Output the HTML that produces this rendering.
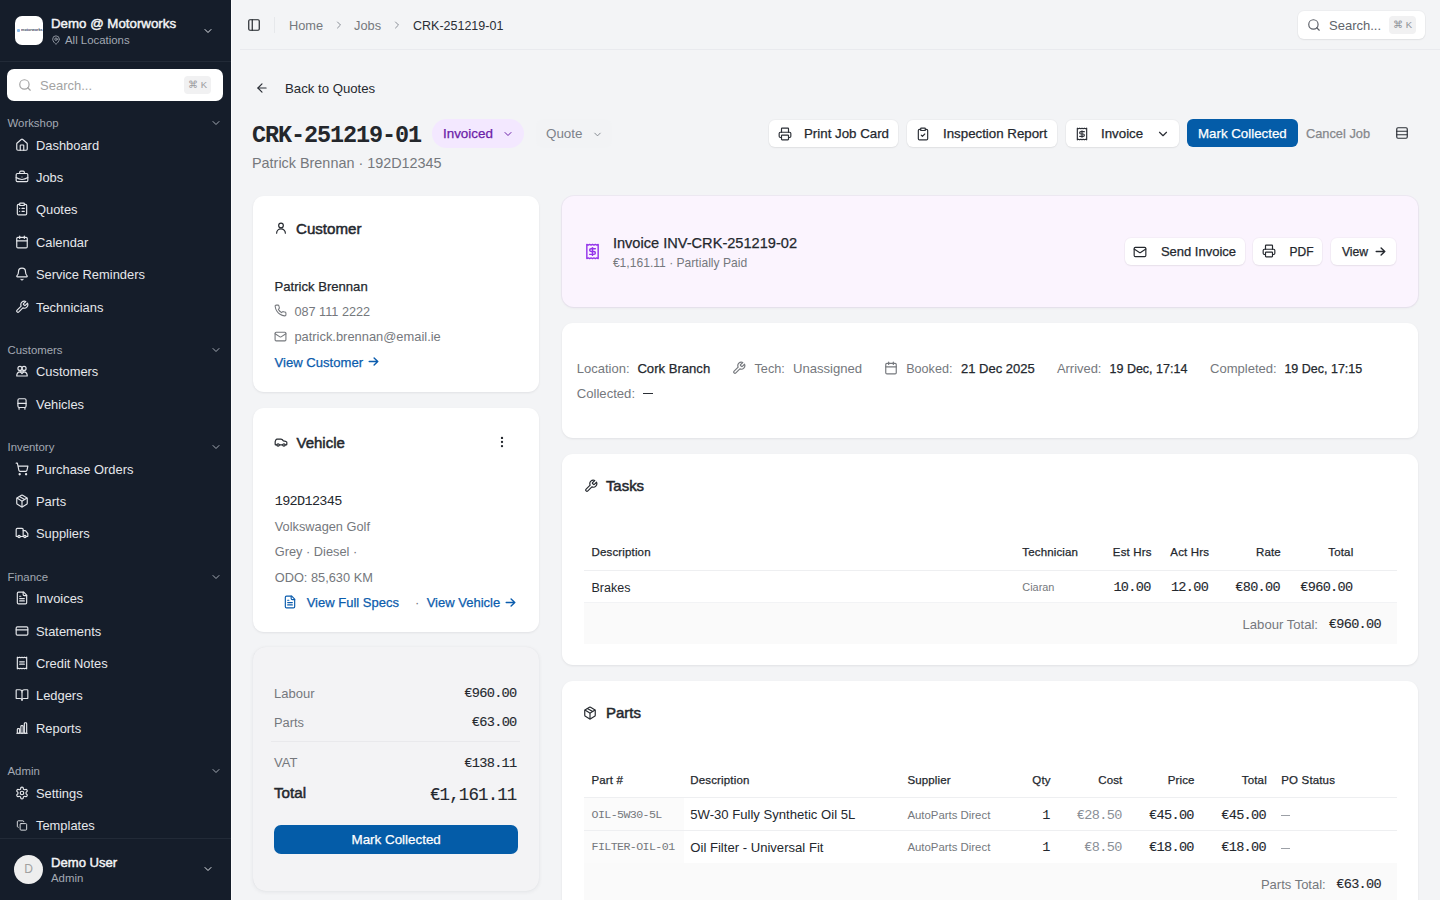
<!DOCTYPE html>
<html><head><meta charset="utf-8">
<style>
*{box-sizing:border-box;margin:0;padding:0}
html,body{width:1440px;height:900px;overflow:hidden}
body{font-family:"Liberation Sans",sans-serif;background:#f3f4f6;color:#1f2328;position:relative}
.abs{position:absolute}
svg.i{fill:none;stroke:currentColor;stroke-width:2;stroke-linecap:round;stroke-linejoin:round;display:block}
.mono{font-family:"Liberation Mono",monospace}
/* sidebar */
#sb{position:absolute;left:0;top:0;width:231px;height:900px;background:#151d2a;color:#e5e7eb}
#sbline{position:absolute;left:231px;top:0;width:1px;height:900px;background:#fbfbfc}
.logo{position:absolute;left:15px;top:16px;width:28px;height:29px;background:#fff;border-radius:7px}
.org{position:absolute;left:51px;top:15.5px;font-size:13.3px;color:#f3f4f6;white-space:nowrap;-webkit-text-stroke:0.45px currentColor}
.loc{position:absolute;left:50px;top:34px;font-size:11.4px;color:#a3a9b3;white-space:nowrap;display:flex;align-items:center}
.sdiv{position:absolute;left:0;top:61px;width:231px;height:1px;background:#222a37}
.ssearch{position:absolute;left:7px;top:69px;width:215.5px;height:32px;background:#fff;border-radius:7px}
.kbd{position:absolute;background:#f1f1f2;border-radius:4px;color:#9a9a9e;font-size:9.5px;text-align:center}
.sec{position:absolute;left:7.5px;margin-top:1px;font-size:11.4px;color:#a3a9b3;white-space:nowrap}
.secchev{position:absolute;left:210px;color:#a3a9b3}
.nav{position:absolute;left:15px;font-size:12.9px;color:#e5e7eb;white-space:nowrap;display:flex;align-items:center;height:16px}
.nav svg{margin-right:7px;width:14px;height:14px;flex:none}
.avatar{position:absolute;left:14px;top:855px;width:29px;height:29px;border-radius:50%;background:#eeeeee;color:#a0a0a0;font-size:12px;text-align:center;line-height:29px}
.bc{top:18px;font-size:12.8px;white-space:nowrap}
.btn{background:#fff;border-radius:6px;box-shadow:0 1px 2px rgba(0,0,0,.06),0 0 0 1px rgba(0,0,0,.025)}
.bt{top:126px;font-size:13.3px;color:#24282e;white-space:nowrap;-webkit-text-stroke:0.25px currentColor}
.t{line-height:1;white-space:nowrap}
</style></head>
<body>
<div id="sb">
  <div class="logo"><div class="abs" style="left:1.5px;top:12.5px;width:3.5px;height:3px;background:#8cbcec;border-radius:1px"></div><div class="abs" style="left:5.5px;top:11.2px;font-size:7.6px;line-height:9px;color:#3a4560;font-weight:bold;transform:scale(0.5);transform-origin:0 0;white-space:nowrap">motorworks</div></div>
  <div class="org">Demo @ Motorworks</div>
  <div class="loc"><svg class="i" width="10" height="10" viewBox="0 0 24 24" style="margin-right:4px;margin-left:1px"><path d="M20 10c0 4.993-5.539 10.193-7.399 11.799a1 1 0 0 1-1.202 0C9.539 20.193 4 14.993 4 10a8 8 0 0 1 16 0"/><circle cx="12" cy="10" r="3"/></svg>All Locations</div>
  <svg class="i abs" style="left:202px;top:25px;color:#e2e5ea" width="12" height="12" viewBox="0 0 24 24"><path d="m6 9 6 6 6-6"/></svg>
  <div class="sdiv"></div>
  <div class="ssearch">
    <svg class="i abs" style="left:11px;top:9px;color:#a3a3a3" width="14" height="14" viewBox="0 0 24 24"><circle cx="11" cy="11" r="8"/><path d="m21 21-4.3-4.3"/></svg>
    <div class="abs" style="left:33px;top:9px;font-size:13px;color:#a3a3a3">Search...</div>
    <div class="kbd" style="left:177px;top:7px;width:27px;height:18px;line-height:18px">⌘ K</div>
  </div>
  <div class="sec" style="top:116px">Workshop</div><svg class="i secchev" style="top:117px" width="12" height="12" viewBox="0 0 24 24"><path d="m6 9 6 6 6-6"/></svg>
  <div class="nav" style="top:137px"><svg class="i" viewBox="0 0 24 24"><path d="M15 21v-8a1 1 0 0 0-1-1h-4a1 1 0 0 0-1 1v8"/><path d="M3 10a2 2 0 0 1 .709-1.528l7-5.999a2 2 0 0 1 2.582 0l7 5.999A2 2 0 0 1 21 10v9a2 2 0 0 1-2 2H5a2 2 0 0 1-2-2z"/></svg>Dashboard</div>
  <div class="nav" style="top:169px"><svg class="i" viewBox="0 0 24 24"><path d="M12 12h.01"/><path d="M16 6V4a2 2 0 0 0-2-2h-4a2 2 0 0 0-2 2v2"/><path d="M22 13a18.15 18.15 0 0 1-20 0"/><rect width="20" height="14" x="2" y="6" rx="2"/></svg>Jobs</div>
  <div class="nav" style="top:201px"><svg class="i" viewBox="0 0 24 24"><rect width="8" height="4" x="8" y="2" rx="1" ry="1"/><path d="M16 4h2a2 2 0 0 1 2 2v14a2 2 0 0 1-2 2H6a2 2 0 0 1-2-2V6a2 2 0 0 1 2-2h2"/><path d="M12 11h4"/><path d="M12 16h4"/><path d="M8 11h.01"/><path d="M8 16h.01"/></svg>Quotes</div>
  <div class="nav" style="top:234px"><svg class="i" viewBox="0 0 24 24"><path d="M8 2v4"/><path d="M16 2v4"/><rect width="18" height="18" x="3" y="4" rx="2"/><path d="M3 10h18"/></svg>Calendar</div>
  <div class="nav" style="top:266px"><svg class="i" viewBox="0 0 24 24"><path d="M10.268 21a2 2 0 0 0 3.464 0"/><path d="M3.262 15.326A1 1 0 0 0 4 17h16a1 1 0 0 0 .74-1.673C19.41 13.956 18 12.499 18 8A6 6 0 0 0 6 8c0 4.499-1.411 5.956-2.738 7.326"/></svg>Service Reminders</div>
  <div class="nav" style="top:299px"><svg class="i" viewBox="0 0 24 24"><path d="M14.7 6.3a1 1 0 0 0 0 1.4l1.6 1.6a1 1 0 0 0 1.4 0l3.77-3.77a6 6 0 0 1-7.94 7.94l-6.91 6.91a2.12 2.12 0 0 1-3-3l6.91-6.91a6 6 0 0 1 7.94-7.94l-3.76 3.76z"/></svg>Technicians</div>
  <div class="sec" style="top:343px">Customers</div><svg class="i secchev" style="top:344px" width="12" height="12" viewBox="0 0 24 24"><path d="m6 9 6 6 6-6"/></svg>
  <div class="nav" style="top:363px"><svg class="i" viewBox="0 0 24 24"><circle cx="8.5" cy="7.5" r="3.5"/><circle cx="15.5" cy="7.5" r="3.5"/><path d="M3 20.5c0-4 2.5-7 6-7h6c3.5 0 6 3 6 7z"/><path d="M9 13.5l3 3 3-3"/></svg>Customers</div>
  <div class="nav" style="top:396px"><svg class="i" viewBox="0 0 24 24"><rect width="14" height="15" x="5" y="3" rx="2.5"/><path d="M5 11h14"/><path d="M7 18v3"/><path d="M17 18v3"/></svg>Vehicles</div>
  <div class="sec" style="top:440px">Inventory</div><svg class="i secchev" style="top:441px" width="12" height="12" viewBox="0 0 24 24"><path d="m6 9 6 6 6-6"/></svg>
  <div class="nav" style="top:461px"><svg class="i" viewBox="0 0 24 24"><circle cx="8" cy="21" r="1"/><circle cx="19" cy="21" r="1"/><path d="M2.05 2.05h2l2.66 12.42a2 2 0 0 0 2 1.58h9.78a2 2 0 0 0 1.95-1.57l1.65-7.43H5.12"/></svg>Purchase Orders</div>
  <div class="nav" style="top:493px"><svg class="i" viewBox="0 0 24 24"><path d="M11 21.73a2 2 0 0 0 2 0l7-4A2 2 0 0 0 21 16V8a2 2 0 0 0-1-1.73l-7-4a2 2 0 0 0-2 0l-7 4A2 2 0 0 0 3 8v8a2 2 0 0 0 1 1.73z"/><path d="M12 22V12"/><path d="m3.3 7 7.703 4.734a2 2 0 0 0 1.994 0L20.7 7"/><path d="m7.5 4.27 9 5.15"/></svg>Parts</div>
  <div class="nav" style="top:525px"><svg class="i" viewBox="0 0 24 24"><path d="M14 18V6a2 2 0 0 0-2-2H4a2 2 0 0 0-2 2v11a1 1 0 0 0 1 1h2"/><path d="M15 18H9"/><path d="M19 18h2a1 1 0 0 0 1-1v-3.65a1 1 0 0 0-.22-.624l-3.48-4.35A1 1 0 0 0 17.52 8H14"/><circle cx="17" cy="18" r="2"/><circle cx="7" cy="18" r="2"/></svg>Suppliers</div>
  <div class="sec" style="top:570px">Finance</div><svg class="i secchev" style="top:571px" width="12" height="12" viewBox="0 0 24 24"><path d="m6 9 6 6 6-6"/></svg>
  <div class="nav" style="top:590px"><svg class="i" viewBox="0 0 24 24"><path d="M15 2H6a2 2 0 0 0-2 2v16a2 2 0 0 0 2 2h12a2 2 0 0 0 2-2V7Z"/><path d="M14 2v4a2 2 0 0 0 2 2h4"/><path d="M10 9H8"/><path d="M16 13H8"/><path d="M16 17H8"/></svg>Invoices</div>
  <div class="nav" style="top:623px"><svg class="i" viewBox="0 0 24 24"><rect width="20" height="14" x="2" y="5" rx="2"/><line x1="2" x2="22" y1="10" y2="10"/></svg>Statements</div>
  <div class="nav" style="top:655px"><svg class="i" viewBox="0 0 24 24"><path d="M4 2v20l2-1 2 1 2-1 2 1 2-1 2 1 2-1 2 1V2l-2 1-2-1-2 1-2-1-2 1-2-1-2 1Z"/><path d="M8 10h8"/><path d="M8 14h8"/></svg>Credit Notes</div>
  <div class="nav" style="top:687px"><svg class="i" viewBox="0 0 24 24"><path d="M12 7v14"/><path d="M3 18a1 1 0 0 1-1-1V4a1 1 0 0 1 1-1h5a4 4 0 0 1 4 4 4 4 0 0 1 4-4h5a1 1 0 0 1 1 1v13a1 1 0 0 1-1 1h-6a3 3 0 0 0-3 3 3 3 0 0 0-3-3z"/></svg>Ledgers</div>
  <div class="nav" style="top:720px"><svg class="i" viewBox="0 0 24 24"><path d="M3 21h18"/><rect x="4" y="13" width="4" height="8" rx="1.5"/><rect x="10" y="8" width="4" height="13" rx="1.5"/><rect x="16" y="3" width="4" height="18" rx="1.5"/></svg>Reports</div>
  <div class="sec" style="top:764px">Admin</div><svg class="i secchev" style="top:765px" width="12" height="12" viewBox="0 0 24 24"><path d="m6 9 6 6 6-6"/></svg>
  <div class="nav" style="top:785px"><svg class="i" viewBox="0 0 24 24"><path d="M12.22 2h-.44a2 2 0 0 0-2 2v.18a2 2 0 0 1-1 1.73l-.43.25a2 2 0 0 1-2 0l-.15-.08a2 2 0 0 0-2.73.73l-.22.38a2 2 0 0 0 .73 2.73l.15.1a2 2 0 0 1 1 1.72v.51a2 2 0 0 1-1 1.74l-.15.09a2 2 0 0 0-.73 2.73l.22.38a2 2 0 0 0 2.73.73l.15-.08a2 2 0 0 1 2 0l.43.25a2 2 0 0 1 1 1.73V20a2 2 0 0 0 2 2h.44a2 2 0 0 0 2-2v-.18a2 2 0 0 1 1-1.73l.43-.25a2 2 0 0 1 2 0l.15.08a2 2 0 0 0 2.73-.73l.22-.39a2 2 0 0 0-.73-2.73l-.15-.08a2 2 0 0 1-1-1.74v-.5a2 2 0 0 1 1-1.74l.15-.09a2 2 0 0 0 .73-2.73l-.22-.38a2 2 0 0 0-2.73-.73l-.15.08a2 2 0 0 1-2 0l-.43-.25a2 2 0 0 1-1-1.73V4a2 2 0 0 0-2-2z"/><circle cx="12" cy="12" r="3"/></svg>Settings</div>
  <div class="nav" style="top:817px"><svg class="i" viewBox="-3 -4 30 30"><rect width="14" height="14" x="8" y="8" rx="2" ry="2"/><path d="M4 16c-1.1 0-2-.9-2-2V4c0-1.1.9-2 2-2h10c1.1 0 2 .9 2 2"/></svg>Templates</div>
  <div class="sdiv" style="top:838px"></div>
  <div class="avatar">D</div>
  <div class="abs" style="left:51px;top:854.5px;font-size:13.1px;color:#f3f4f6;-webkit-text-stroke:0.45px currentColor">Demo User</div>
  <div class="abs" style="left:51px;top:872px;font-size:11.4px;color:#a3a9b3">Admin</div>
  <svg class="i abs" style="left:202px;top:863px;color:#e2e5ea" width="12" height="12" viewBox="0 0 24 24"><path d="m6 9 6 6 6-6"/></svg>
</div>
<div id="sbline"></div>
<!-- topbar -->
<div class="abs" style="left:240px;top:49px;width:1200px;height:1px;background:#e9eaee"></div>
<svg class="i abs" style="left:247px;top:18px;color:#1f2328;" width="14" height="14" viewBox="0 0 24 24" stroke-width="2"><rect width="18" height="18" x="3" y="3" rx="2"/><path d="M9 3v18"/></svg>
<div class="abs" style="left:274px;top:17px;width:1px;height:16px;background:#e6e8eb"></div>
<div class="abs bc" style="left:289px;color:#75787d">Home</div>
<svg class="i abs" style="left:333px;top:19px;color:#8a8f97;" width="12" height="12" viewBox="0 0 24 24" stroke-width="2"><path d="m9 18 6-6-6-6"/></svg>
<div class="abs bc" style="left:354px;color:#75787d">Jobs</div>
<svg class="i abs" style="left:391px;top:19px;color:#8a8f97;" width="12" height="12" viewBox="0 0 24 24" stroke-width="2"><path d="m9 18 6-6-6-6"/></svg>
<div class="abs bc" style="left:413px;color:#2a2e35;font-size:12.5px;top:18.8px">CRK-251219-01</div>
<div class="abs btn" style="left:1298px;top:11px;width:127px;height:28px"></div>
<svg class="i abs" style="left:1307px;top:18px;color:#5c6068;" width="14" height="14" viewBox="0 0 24 24" stroke-width="2"><circle cx="11" cy="11" r="8"/><path d="m21 21-4.3-4.3"/></svg>
<div class="abs" style="left:1329px;top:17.5px;font-size:13px;color:#60646b">Search...</div>
<div class="abs kbd" style="left:1389px;top:16px;width:27px;height:18px;line-height:18px;background:#f1f1f2;color:#8c9097">⌘ K</div>
<!-- header -->
<svg class="i abs" style="left:255px;top:81px;color:#2b2f36;" width="14" height="14" viewBox="0 0 24 24" stroke-width="2"><path d="m12 19-7-7 7-7"/><path d="M19 12H5"/></svg>
<div class="abs" style="left:285px;top:81px;font-size:13.2px;color:#24282e">Back to Quotes</div>
<div class="abs mono" style="left:252px;top:122px;font-size:23.5px;font-weight:bold;color:#24272c;letter-spacing:-1.1px;line-height:normal">CRK-251219-01</div>
<div class="abs" style="left:432px;top:119px;width:92px;height:29px;border-radius:15px;background:#f3e8ff"></div>
<div class="abs" style="left:443px;top:126px;font-size:13.4px;color:#6b21a8;-webkit-text-stroke:0.25px currentColor">Invoiced</div>
<svg class="i abs" style="left:501.8px;top:127.5px;color:#6b21a8;" width="12" height="12" viewBox="0 0 24 24" stroke-width="2.5"><path d="m6 9 6 6 6-6"/></svg>
<div class="abs" style="left:536px;top:119px;width:76px;height:29px;border-radius:8px;background:#f2f3f5"></div>
<div class="abs" style="left:546px;top:126px;font-size:13.4px;color:#7d828a">Quote</div>
<svg class="i abs" style="left:591.5px;top:128.6px;color:#7d828a;" width="11" height="11" viewBox="0 0 24 24" stroke-width="2.2"><path d="m6 9 6 6 6-6"/></svg>
<div class="abs" style="left:252px;top:155px;font-size:14.4px;color:#75787d">Patrick Brennan · 192D12345</div>
<div class="abs btn" style="left:769px;top:120px;width:129px;height:27px"></div>
<svg class="i abs" style="left:778px;top:127px;color:#2b2f36;" width="14" height="14" viewBox="0 0 24 24" stroke-width="2"><path d="M6 18H4a2 2 0 0 1-2-2v-5a2 2 0 0 1 2-2h16a2 2 0 0 1 2 2v5a2 2 0 0 1-2 2h-2"/><path d="M6 9V3a1 1 0 0 1 1-1h10a1 1 0 0 1 1 1v6"/><rect x="6" y="14" width="12" height="8" rx="1"/></svg>
<div class="abs bt" style="left:804px">Print Job Card</div>
<div class="abs btn" style="left:907px;top:120px;width:150px;height:27px"></div>
<svg class="i abs" style="left:916px;top:127px;color:#2b2f36;" width="14" height="14" viewBox="0 0 24 24" stroke-width="2"><rect width="8" height="4" x="8" y="2" rx="1" ry="1"/><path d="M16 4h2a2 2 0 0 1 2 2v14a2 2 0 0 1-2 2H6a2 2 0 0 1-2-2V6a2 2 0 0 1 2-2h2"/><path d="m9 14 2 2 4-4"/></svg>
<div class="abs bt" style="left:943px">Inspection Report</div>
<div class="abs btn" style="left:1066px;top:120px;width:113px;height:27px"></div>
<svg class="i abs" style="left:1075px;top:127px;color:#2b2f36;" width="14" height="14" viewBox="0 0 24 24" stroke-width="2"><path d="M4 2v20l2-1 2 1 2-1 2 1 2-1 2 1 2-1 2 1V2l-2 1-2-1-2 1-2-1-2 1-2-1-2 1Z"/><path d="M16 8h-6a2 2 0 1 0 0 4h4a2 2 0 1 1 0 4H8"/><path d="M12 17.5v-11"/></svg>
<div class="abs bt" style="left:1101px">Invoice</div>
<svg class="i abs" style="left:1156px;top:127px;color:#2b2f36;" width="14" height="14" viewBox="0 0 24 24" stroke-width="2"><path d="m6 9 6 6 6-6"/></svg>
<div class="abs" style="left:1187px;top:119px;width:111px;height:28px;border-radius:6px;background:#045ca8"></div>
<div class="abs bt" style="left:1198px;color:#fff">Mark Collected</div>
<div class="abs bt" style="left:1306px;color:#85878b;font-size:12.8px">Cancel Job</div>
<svg class="i abs" style="left:1395px;top:126px;color:#2b2f36;" width="14" height="14" viewBox="0 0 24 24" stroke-width="2"><rect width="18" height="18" x="3" y="3" rx="2"/><path d="M3 9h18"/><path d="M3 15h18"/></svg>
<!--cards-->
<div class="abs" style="left:253px;top:196px;width:286px;height:196px;background:#fff;border-radius:11px;box-shadow:0 1px 3px rgba(16,24,40,.05),0 1px 2px rgba(16,24,40,.03)"></div>
<svg class="i abs" style="left:274px;top:221px;color:#24282e;" width="14" height="14" viewBox="0 0 24 24" stroke-width="2"><circle cx="12" cy="7.5" r="4"/><path d="M19.5 21a7.5 7.5 0 0 0-15 0"/></svg>
<div class="abs t" style="left:296px;top:221px;font-size:15.1px;color:#24282e;font-weight:normal;-webkit-text-stroke:0.5px currentColor;">Customer</div>
<div class="abs t" style="left:274.5px;top:280px;font-size:13.1px;color:#24282e;font-weight:normal;-webkit-text-stroke:0.25px currentColor;">Patrick Brennan</div>
<svg class="i abs" style="left:274px;top:304px;color:#75787d;" width="13" height="13" viewBox="0 0 24 24" stroke-width="1.8"><path d="M22 16.92v3a2 2 0 0 1-2.18 2 19.79 19.79 0 0 1-8.63-3.07 19.5 19.5 0 0 1-6-6 19.79 19.79 0 0 1-3.07-8.67A2 2 0 0 1 4.11 2h3a2 2 0 0 1 2 1.72 12.84 12.84 0 0 0 .7 2.81 2 2 0 0 1-.45 2.11L8.09 9.91a16 16 0 0 0 6 6l1.27-1.27a2 2 0 0 1 2.11-.45 12.84 12.84 0 0 0 2.81.7A2 2 0 0 1 22 16.92z"/></svg>
<div class="abs t" style="left:294.4px;top:306px;font-size:12.7px;color:#75787d;font-weight:normal;">087 111 2222</div>
<svg class="i abs" style="left:274px;top:330px;color:#75787d;" width="13" height="13" viewBox="0 0 24 24" stroke-width="1.8"><rect width="20" height="16" x="2" y="4" rx="2"/><path d="m22 7-8.97 5.7a1.94 1.94 0 0 1-2.06 0L2 7"/></svg>
<div class="abs t" style="left:294.4px;top:331px;font-size:12.9px;color:#75787d;font-weight:normal;">patrick.brennan@email.ie</div>
<div class="abs t" style="left:274.5px;top:356px;font-size:13.1px;color:#0b5cad;font-weight:normal;-webkit-text-stroke:0.25px currentColor;">View Customer</div>
<svg class="abs" style="left:368.0px;top:357.0px" width="11" height="9" viewBox="-0.5 -0.5 11 9" fill="none" stroke="#0b5cad" stroke-width="1.4" stroke-linecap="round" stroke-linejoin="round"><path d="M0.7 4h8.6M5.6 0.5 9.3 4 5.6 7.5"/></svg>
<div class="abs" style="left:253px;top:408px;width:286px;height:224px;background:#fff;border-radius:11px;box-shadow:0 1px 3px rgba(16,24,40,.05),0 1px 2px rgba(16,24,40,.03)"></div>
<svg class="i abs" style="left:274px;top:435px;color:#24282e;" width="14" height="14" viewBox="0 0 24 24" stroke-width="2"><path d="M19 17h2c.6 0 1-.4 1-1v-3c0-.9-.7-1.7-1.5-1.9C18.7 10.6 16 10 16 10s-1.3-1.4-2.2-2.3c-.5-.4-1.1-.7-1.8-.7H5c-.6 0-1.1.4-1.4.9l-1.4 2.9A3.7 3.7 0 0 0 2 12v4c0 .6.4 1 1 1h2"/><circle cx="7" cy="17" r="2"/><path d="M9 17h6"/><circle cx="17" cy="17" r="2"/></svg>
<div class="abs t" style="left:296.5px;top:435px;font-size:15px;color:#24282e;font-weight:normal;-webkit-text-stroke:0.5px currentColor;">Vehicle</div>
<svg class="i abs" style="left:495px;top:435px;color:#24282e;" width="14" height="14" viewBox="0 0 24 24" stroke-width="2"><circle cx="12" cy="12" r="1"/><circle cx="12" cy="5" r="1"/><circle cx="12" cy="19" r="1"/></svg>
<div class="abs t" style="left:274.7px;top:495px;font-size:13.52px;color:#24282e;font-weight:normal;font-family:'Liberation Mono',monospace;letter-spacing:-0.67px;">192D12345</div>
<div class="abs t" style="left:274.7px;top:521px;font-size:12.8px;color:#75787d;font-weight:normal;">Volkswagen Golf</div>
<div class="abs t" style="left:274.7px;top:546px;font-size:12.8px;color:#75787d;font-weight:normal;">Grey · Diesel ·</div>
<div class="abs t" style="left:274.7px;top:572px;font-size:12.8px;color:#75787d;font-weight:normal;">ODO: 85,630 KM</div>
<svg class="i abs" style="left:283px;top:595px;color:#0b5cad;" width="14" height="14" viewBox="0 0 24 24" stroke-width="1.8"><path d="M15 2H6a2 2 0 0 0-2 2v16a2 2 0 0 0 2 2h12a2 2 0 0 0 2-2V7Z"/><path d="M14 2v4a2 2 0 0 0 2 2h4"/><path d="M10 9H8"/><path d="M16 13H8"/><path d="M16 17H8"/></svg>
<div class="abs t" style="left:306.7px;top:596px;font-size:13px;color:#0b5cad;font-weight:normal;-webkit-text-stroke:0.25px currentColor;">View Full Specs</div>
<div class="abs t" style="left:415px;top:596px;font-size:13px;color:#75787d;font-weight:normal;">·</div>
<div class="abs t" style="left:426.7px;top:596px;font-size:13px;color:#0b5cad;font-weight:normal;-webkit-text-stroke:0.25px currentColor;">View Vehicle</div>
<svg class="abs" style="left:505.0px;top:597.5px" width="11" height="9" viewBox="-0.5 -0.5 11 9" fill="none" stroke="#0b5cad" stroke-width="1.4" stroke-linecap="round" stroke-linejoin="round"><path d="M0.7 4h8.6M5.6 0.5 9.3 4 5.6 7.5"/></svg>
<div class="abs" style="left:253px;top:647px;width:286px;height:244px;background:#f3f3f5;border-radius:13px;box-shadow:0 1px 4px rgba(16,24,40,.07),0 0 1px rgba(16,24,40,.06)"></div>
<div class="abs t" style="left:274px;top:687px;font-size:13px;color:#75787d;font-weight:normal;">Labour</div>
<div class="abs t" style="right:923.38px;top:687px;font-size:13.63px;color:#24282e;font-weight:normal;font-family:'Liberation Mono',monospace;-webkit-text-stroke:0.12px currentColor;letter-spacing:-0.68px;">€960.00</div>
<div class="abs t" style="left:274px;top:717px;font-size:12.85px;color:#75787d;font-weight:normal;">Parts</div>
<div class="abs t" style="right:923.38px;top:716px;font-size:13.63px;color:#24282e;font-weight:normal;font-family:'Liberation Mono',monospace;-webkit-text-stroke:0.12px currentColor;letter-spacing:-0.68px;">€63.00</div>
<div class="abs" style="left:271px;top:741px;width:249px;height:1px;background:#e9e9ec"></div>
<div class="abs t" style="left:274px;top:756px;font-size:13px;color:#75787d;font-weight:normal;">VAT</div>
<div class="abs t" style="right:923.38px;top:757px;font-size:13.63px;color:#24282e;font-weight:normal;font-family:'Liberation Mono',monospace;-webkit-text-stroke:0.12px currentColor;letter-spacing:-0.68px;">€138.11</div>
<div class="abs t" style="left:274px;top:785px;font-size:15.2px;color:#24282e;font-weight:normal;-webkit-text-stroke:0.5px currentColor;">Total</div>
<div class="abs t" style="right:923.56px;top:787px;font-size:17.44px;color:#24282e;font-weight:normal;font-family:'Liberation Mono',monospace;-webkit-text-stroke:0.12px currentColor;letter-spacing:-0.86px;">€1,161.11</div>
<div class="abs" style="left:274px;top:825px;width:244px;height:29px;background:#045ca8;border-radius:7px"></div>
<div class="abs t" style="left:351.5px;top:833px;font-size:13.4px;color:#fff;font-weight:normal;-webkit-text-stroke:0.25px currentColor;">Mark Collected</div>
<div class="abs" style="left:562px;top:196px;width:856px;height:111px;background:#fbf4fe;border-radius:12px;box-shadow:0 1px 3px rgba(16,24,40,.06),0 0 0 1px rgba(150,60,200,.05)"></div>
<svg class="i abs" style="left:584px;top:243px;color:#9333ea;" width="17" height="17" viewBox="0 0 24 24" stroke-width="2"><path d="M4 2v20l2-1 2 1 2-1 2 1 2-1 2 1 2-1 2 1V2l-2 1-2-1-2 1-2-1-2 1-2-1-2 1Z"/><path d="M16 8h-6a2 2 0 1 0 0 4h4a2 2 0 1 1 0 4H8"/><path d="M12 17.5v-11"/></svg>
<div class="abs t" style="left:612.9px;top:236px;font-size:14.6px;color:#24282e;font-weight:normal;-webkit-text-stroke:0.25px currentColor;">Invoice INV-CRK-251219-02</div>
<div class="abs t" style="left:612.9px;top:257px;font-size:12.1px;color:#75787d;font-weight:normal;">€1,161.11 · Partially Paid</div>
<div class="abs" style="left:1125px;top:238px;width:120px;height:27px;background:#fff;border-radius:6px;box-shadow:0 1px 2px rgba(0,0,0,.06),0 0 0 1px rgba(0,0,0,.025)"></div>
<svg class="i abs" style="left:1133px;top:245px;color:#24282e;" width="14" height="14" viewBox="0 0 24 24" stroke-width="1.9"><rect width="20" height="16" x="2" y="4" rx="2"/><path d="m22 7-8.97 5.7a1.94 1.94 0 0 1-2.06 0L2 7"/></svg>
<div class="abs t" style="left:1160.9px;top:245px;font-size:13px;color:#24282e;font-weight:normal;-webkit-text-stroke:0.25px currentColor;">Send Invoice</div>
<div class="abs" style="left:1253px;top:238px;width:69px;height:27px;background:#fff;border-radius:6px;box-shadow:0 1px 2px rgba(0,0,0,.06),0 0 0 1px rgba(0,0,0,.025)"></div>
<svg class="i abs" style="left:1262px;top:244px;color:#24282e;" width="14" height="14" viewBox="0 0 24 24" stroke-width="1.9"><path d="M6 18H4a2 2 0 0 1-2-2v-5a2 2 0 0 1 2-2h16a2 2 0 0 1 2 2v5a2 2 0 0 1-2 2h-2"/><path d="M6 9V3a1 1 0 0 1 1-1h10a1 1 0 0 1 1 1v6"/><rect x="6" y="14" width="12" height="8" rx="1"/></svg>
<div class="abs t" style="left:1289.6px;top:246px;font-size:12px;color:#24282e;font-weight:normal;-webkit-text-stroke:0.25px currentColor;">PDF</div>
<div class="abs" style="left:1331px;top:238px;width:65px;height:27px;background:#fff;border-radius:6px;box-shadow:0 1px 2px rgba(0,0,0,.06),0 0 0 1px rgba(0,0,0,.025)"></div>
<div class="abs t" style="left:1341.9px;top:246px;font-size:12.2px;color:#24282e;font-weight:normal;-webkit-text-stroke:0.25px currentColor;">View</div>
<svg class="abs" style="left:1374.5px;top:247.3px" width="11" height="9" viewBox="-0.5 -0.5 11 9" fill="none" stroke="#24282e" stroke-width="1.4" stroke-linecap="round" stroke-linejoin="round"><path d="M0.7 4h8.6M5.6 0.5 9.3 4 5.6 7.5"/></svg>
<div class="abs" style="left:562px;top:323px;width:856px;height:115px;background:#fff;border-radius:11px;box-shadow:0 1px 3px rgba(16,24,40,.05),0 1px 2px rgba(16,24,40,.03)"></div>
<div class="abs t" style="left:576.8px;top:362px;font-size:13px;color:#75787d;font-weight:normal;">Location:</div>
<div class="abs t" style="left:637.4px;top:362px;font-size:13.1px;color:#24282e;font-weight:normal;-webkit-text-stroke:0.25px currentColor;">Cork Branch</div>
<svg class="i abs" style="left:732px;top:361px;color:#75787d;" width="14" height="14" viewBox="0 0 24 24" stroke-width="1.8"><path d="M14.7 6.3a1 1 0 0 0 0 1.4l1.6 1.6a1 1 0 0 0 1.4 0l3.77-3.77a6 6 0 0 1-7.94 7.94l-6.91 6.91a2.12 2.12 0 0 1-3-3l6.91-6.91a6 6 0 0 1 7.94-7.94l-3.76 3.76z"/></svg>
<div class="abs t" style="left:754.5px;top:363px;font-size:12.7px;color:#75787d;font-weight:normal;">Tech:</div>
<div class="abs t" style="left:793px;top:362px;font-size:13.1px;color:#75787d;font-weight:normal;">Unassigned</div>
<svg class="i abs" style="left:884px;top:361px;color:#75787d;" width="14" height="14" viewBox="0 0 24 24" stroke-width="1.8"><path d="M8 2v4"/><path d="M16 2v4"/><rect width="18" height="18" x="3" y="4" rx="2"/><path d="M3 10h18"/></svg>
<div class="abs t" style="left:906.2px;top:363px;font-size:12.6px;color:#75787d;font-weight:normal;">Booked:</div>
<div class="abs t" style="left:961px;top:362px;font-size:13px;color:#24282e;font-weight:normal;-webkit-text-stroke:0.25px currentColor;">21 Dec 2025</div>
<div class="abs t" style="left:1056.9px;top:363px;font-size:12.95px;color:#75787d;font-weight:normal;">Arrived:</div>
<div class="abs t" style="left:1109.5px;top:363px;font-size:12.5px;color:#24282e;font-weight:normal;-webkit-text-stroke:0.25px currentColor;">19 Dec, 17:14</div>
<div class="abs t" style="left:1210px;top:362px;font-size:13.06px;color:#75787d;font-weight:normal;">Completed:</div>
<div class="abs t" style="left:1284.4px;top:363px;font-size:12.5px;color:#24282e;font-weight:normal;-webkit-text-stroke:0.25px currentColor;">19 Dec, 17:15</div>
<div class="abs t" style="left:576.8px;top:387px;font-size:13.1px;color:#75787d;font-weight:normal;">Collected:</div>
<div class="abs" style="left:643px;top:392.6px;width:10px;height:1.7px;background:#2b2f36"></div>
<div class="abs" style="left:562px;top:454px;width:856px;height:211px;background:#fff;border-radius:11px;box-shadow:0 1px 3px rgba(16,24,40,.05),0 1px 2px rgba(16,24,40,.03)"></div>
<svg class="i abs" style="left:583.5px;top:479px;color:#24282e;" width="14" height="14" viewBox="0 0 24 24" stroke-width="1.8"><path d="M14.7 6.3a1 1 0 0 0 0 1.4l1.6 1.6a1 1 0 0 0 1.4 0l3.77-3.77a6 6 0 0 1-7.94 7.94l-6.91 6.91a2.12 2.12 0 0 1-3-3l6.91-6.91a6 6 0 0 1 7.94-7.94l-3.76 3.76z"/></svg>
<div class="abs t" style="left:605.9px;top:479px;font-size:14.95px;color:#24282e;font-weight:normal;-webkit-text-stroke:0.5px currentColor;">Tasks</div>
<div class="abs t" style="left:591.5px;top:547px;font-size:11.5px;color:#24282e;font-weight:normal;letter-spacing:0.15px;-webkit-text-stroke:0.25px currentColor;">Description</div>
<div class="abs t" style="left:1022.3px;top:547px;font-size:11.5px;color:#24282e;font-weight:normal;letter-spacing:0.15px;-webkit-text-stroke:0.25px currentColor;">Technician</div>
<div class="abs t" style="right:288.45px;top:547px;font-size:11.5px;color:#24282e;font-weight:normal;letter-spacing:0.15px;-webkit-text-stroke:0.25px currentColor;">Est Hrs</div>
<div class="abs t" style="right:230.95px;top:547px;font-size:11.5px;color:#24282e;font-weight:normal;letter-spacing:0.15px;-webkit-text-stroke:0.25px currentColor;">Act Hrs</div>
<div class="abs t" style="right:159.15px;top:547px;font-size:11.5px;color:#24282e;font-weight:normal;letter-spacing:0.15px;-webkit-text-stroke:0.25px currentColor;">Rate</div>
<div class="abs t" style="right:86.65px;top:547px;font-size:11.5px;color:#24282e;font-weight:normal;letter-spacing:0.15px;-webkit-text-stroke:0.25px currentColor;">Total</div>
<div class="abs" style="left:584px;top:570px;width:813px;height:1px;background:#eeeff1"></div>
<div class="abs t" style="left:591.5px;top:582px;font-size:12.5px;color:#24282e;font-weight:normal;">Brakes</div>
<div class="abs t" style="left:1022.3px;top:582px;font-size:10.9px;color:#75787d;font-weight:normal;">Ciaran</div>
<div class="abs t" style="right:289.27px;top:581px;font-size:13.57px;color:#24282e;font-weight:normal;font-family:'Liberation Mono',monospace;-webkit-text-stroke:0.12px currentColor;letter-spacing:-0.67px;">10.00</div>
<div class="abs t" style="right:231.77px;top:581px;font-size:13.57px;color:#24282e;font-weight:normal;font-family:'Liberation Mono',monospace;-webkit-text-stroke:0.12px currentColor;letter-spacing:-0.67px;">12.00</div>
<div class="abs t" style="right:159.97px;top:581px;font-size:13.57px;color:#24282e;font-weight:normal;font-family:'Liberation Mono',monospace;-webkit-text-stroke:0.12px currentColor;letter-spacing:-0.67px;">€80.00</div>
<div class="abs t" style="right:87.47px;top:581px;font-size:13.57px;color:#24282e;font-weight:normal;font-family:'Liberation Mono',monospace;-webkit-text-stroke:0.12px currentColor;letter-spacing:-0.67px;">€960.00</div>
<div class="abs" style="left:584px;top:602px;width:813px;height:1px;background:#f2f3f5"></div>
<div class="abs" style="left:584px;top:603px;width:813px;height:41px;background:#fafafa"></div>
<div class="abs t" style="right:122.00px;top:618px;font-size:13.1px;color:#75787d;font-weight:normal;">Labour Total:</div>
<div class="abs t" style="right:58.97px;top:618px;font-size:13.57px;color:#24282e;font-weight:normal;font-family:'Liberation Mono',monospace;-webkit-text-stroke:0.12px currentColor;letter-spacing:-0.67px;">€960.00</div>
<div class="abs" style="left:562px;top:681px;width:856px;height:260px;background:#fff;border-radius:11px;box-shadow:0 1px 3px rgba(16,24,40,.05),0 1px 2px rgba(16,24,40,.03)"></div>
<svg class="i abs" style="left:583px;top:706px;color:#24282e;" width="14" height="14" viewBox="0 0 24 24" stroke-width="2"><path d="M11 21.73a2 2 0 0 0 2 0l7-4A2 2 0 0 0 21 16V8a2 2 0 0 0-1-1.73l-7-4a2 2 0 0 0-2 0l-7 4A2 2 0 0 0 3 8v8a2 2 0 0 0 1 1.73z"/><path d="M12 22V12"/><path d="m3.3 7 7.703 4.734a2 2 0 0 0 1.994 0L20.7 7"/><path d="m7.5 4.27 9 5.15"/></svg>
<div class="abs t" style="left:605.9px;top:705px;font-size:15px;color:#24282e;font-weight:normal;-webkit-text-stroke:0.5px currentColor;">Parts</div>
<div class="abs t" style="left:591.5px;top:775px;font-size:11.5px;color:#24282e;font-weight:normal;letter-spacing:0.15px;-webkit-text-stroke:0.25px currentColor;">Part #</div>
<div class="abs t" style="left:690.3px;top:775px;font-size:11.5px;color:#24282e;font-weight:normal;letter-spacing:0.15px;-webkit-text-stroke:0.25px currentColor;">Description</div>
<div class="abs t" style="left:907.4px;top:775px;font-size:11.5px;color:#24282e;font-weight:normal;letter-spacing:0.15px;-webkit-text-stroke:0.25px currentColor;">Supplier</div>
<div class="abs t" style="right:389.35px;top:775px;font-size:11.5px;color:#24282e;font-weight:normal;letter-spacing:0.15px;-webkit-text-stroke:0.25px currentColor;">Qty</div>
<div class="abs t" style="right:317.55px;top:775px;font-size:11.5px;color:#24282e;font-weight:normal;letter-spacing:0.15px;-webkit-text-stroke:0.25px currentColor;">Cost</div>
<div class="abs t" style="right:245.35px;top:775px;font-size:11.5px;color:#24282e;font-weight:normal;letter-spacing:0.15px;-webkit-text-stroke:0.25px currentColor;">Price</div>
<div class="abs t" style="right:173.15px;top:775px;font-size:11.5px;color:#24282e;font-weight:normal;letter-spacing:0.15px;-webkit-text-stroke:0.25px currentColor;">Total</div>
<div class="abs t" style="left:1281.3px;top:775px;font-size:11.5px;color:#24282e;font-weight:normal;letter-spacing:0.15px;-webkit-text-stroke:0.25px currentColor;">PO Status</div>
<div class="abs" style="left:584px;top:797px;width:813px;height:1px;background:#eeeff1"></div>
<div class="abs" style="left:584px;top:798px;width:100px;height:65px;background:#fbfbfb"></div>
<div class="abs t" style="left:591.5px;top:809px;font-size:11.61px;color:#75787d;font-weight:normal;font-family:'Liberation Mono',monospace;letter-spacing:-0.58px;">OIL-5W30-5L</div>
<div class="abs t" style="left:690.3px;top:808px;font-size:13.1px;color:#24282e;font-weight:normal;">5W-30 Fully Synthetic Oil 5L</div>
<div class="abs t" style="left:907.4px;top:810px;font-size:11.4px;color:#75787d;font-weight:normal;">AutoParts Direct</div>
<div class="abs t" style="right:390.17px;top:809px;font-size:13.57px;color:#24282e;font-weight:normal;font-family:'Liberation Mono',monospace;letter-spacing:-0.67px;">1</div>
<div class="abs t" style="right:318.37px;top:809px;font-size:13.57px;color:#8a8f97;font-weight:normal;font-family:'Liberation Mono',monospace;letter-spacing:-0.67px;">€28.50</div>
<div class="abs t" style="right:246.17px;top:809px;font-size:13.57px;color:#24282e;font-weight:normal;font-family:'Liberation Mono',monospace;-webkit-text-stroke:0.12px currentColor;letter-spacing:-0.67px;">€45.00</div>
<div class="abs t" style="right:173.97px;top:809px;font-size:13.57px;color:#24282e;font-weight:normal;font-family:'Liberation Mono',monospace;-webkit-text-stroke:0.12px currentColor;letter-spacing:-0.67px;">€45.00</div>
<div class="abs" style="left:1281px;top:815.1px;width:9px;height:1px;background:#9ca0a6"></div>
<div class="abs t" style="left:591.5px;top:841px;font-size:11.61px;color:#75787d;font-weight:normal;font-family:'Liberation Mono',monospace;letter-spacing:-0.58px;">FILTER-OIL-01</div>
<div class="abs t" style="left:690.3px;top:841px;font-size:13.1px;color:#24282e;font-weight:normal;">Oil Filter - Universal Fit</div>
<div class="abs t" style="left:907.4px;top:842px;font-size:11.4px;color:#75787d;font-weight:normal;">AutoParts Direct</div>
<div class="abs t" style="right:390.17px;top:841px;font-size:13.57px;color:#24282e;font-weight:normal;font-family:'Liberation Mono',monospace;letter-spacing:-0.67px;">1</div>
<div class="abs t" style="right:318.37px;top:841px;font-size:13.57px;color:#8a8f97;font-weight:normal;font-family:'Liberation Mono',monospace;letter-spacing:-0.67px;">€8.50</div>
<div class="abs t" style="right:246.17px;top:841px;font-size:13.57px;color:#24282e;font-weight:normal;font-family:'Liberation Mono',monospace;-webkit-text-stroke:0.12px currentColor;letter-spacing:-0.67px;">€18.00</div>
<div class="abs t" style="right:173.97px;top:841px;font-size:13.57px;color:#24282e;font-weight:normal;font-family:'Liberation Mono',monospace;-webkit-text-stroke:0.12px currentColor;letter-spacing:-0.67px;">€18.00</div>
<div class="abs" style="left:1281px;top:847.5px;width:9px;height:1px;background:#9ca0a6"></div>
<div class="abs" style="left:584px;top:830px;width:813px;height:1px;background:#eeeff1"></div>
<div class="abs" style="left:584px;top:863px;width:813px;height:60px;background:#fafafa"></div>
<div class="abs t" style="right:114.30px;top:878px;font-size:13px;color:#75787d;font-weight:normal;">Parts Total:</div>
<div class="abs t" style="right:58.97px;top:878px;font-size:13.57px;color:#24282e;font-weight:normal;font-family:'Liberation Mono',monospace;-webkit-text-stroke:0.12px currentColor;letter-spacing:-0.67px;">€63.00</div>
<!--/cards-->
</body></html>
